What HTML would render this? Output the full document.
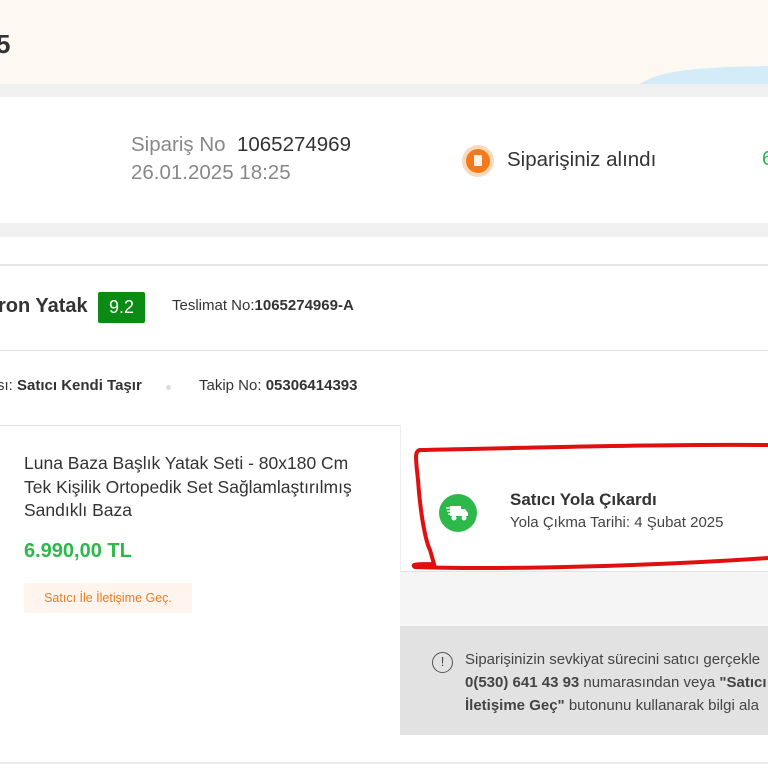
<!DOCTYPE html>
<html><head><meta charset="utf-8"><style>
*{margin:0;padding:0;box-sizing:border-box}
body{width:768px;height:768px;overflow:hidden;background:#fff;font-family:"Liberation Sans",Arial,sans-serif;position:relative;color:#333}
.a{position:absolute;white-space:nowrap}
</style></head><body>
<div class="a" style="left:0;top:0;width:768px;height:84px;background:#fdf9f2"></div>
<svg class="a" style="left:640px;top:62px" width="128" height="22"><path d="M0 22 C20 8 60 5 128 4 L128 22 Z" fill="#d4ecf7"/></svg>
<div class="a" style="left:-4px;top:29px;font-size:26px;font-weight:bold;color:#333">5</div>
<div class="a" style="left:0;top:84px;width:768px;height:13px;background:#f0f0f0"></div>
<div class="a" style="left:0;top:223px;width:768px;height:14px;background:#f0f0f0"></div>
<div class="a" style="left:131px;top:133px;font-size:20.5px;color:#888">Sipariş No&nbsp; <span style="color:#333">1065274969</span></div>
<div class="a" style="left:131px;top:161px;font-size:20.5px;color:#888">26.01.2025 18:25</div>
<div class="a" style="left:462px;top:145px;width:32px;height:32px;border-radius:50%;background:#fbd9bf"></div>
<div class="a" style="left:466px;top:149px;width:24px;height:24px;border-radius:50%;background:#f27a1a"></div>
<div class="a" style="left:474px;top:155px;width:8px;height:11px;background:#fff3e8;border-radius:1px"></div>
<div class="a" style="left:507px;top:148px;font-size:20.5px;color:#333">Siparişiniz alındı</div>
<div class="a" style="left:762px;top:148px;font-size:20px;color:#2db84b">6</div>
<div class="a" style="left:0;top:264px;width:768px;height:2px;background:#e6e6e6"></div>
<div class="a" style="left:-2px;top:295px;font-size:20px;font-weight:bold;color:#333">ron Yatak</div>
<div class="a" style="left:98px;top:292px;width:47px;height:31px;background:#0b8a14;border-radius:2px;color:#fff;font-size:18px;text-align:center;line-height:31px">9.2</div>
<div class="a" style="left:172px;top:297px;font-size:15px;color:#333">Teslimat No:<b>1065274969-A</b></div>
<div class="a" style="left:0;top:350px;width:768px;height:1px;background:#e0e0e0"></div>
<div class="a" style="left:-3px;top:377px;font-size:15px;color:#333">sı: <b>Satıcı Kendi Taşır</b></div>
<div class="a" style="left:166px;top:385px;width:5px;height:5px;border-radius:50%;background:#ddd"></div>
<div class="a" style="left:199px;top:377px;font-size:15px;color:#333">Takip No: <b>05306414393</b></div>
<div class="a" style="left:0;top:425px;width:768px;height:1px;background:#e0e0e0"></div>
<div class="a" style="left:24px;top:452px;font-size:17.5px;line-height:23.5px;color:#333">Luna Baza Başlık Yatak Seti - 80x180 Cm<br>Tek Kişilik Ortopedik Set Sağlamlaştırılmış<br>Sandıklı Baza</div>
<div class="a" style="left:24px;top:540px;font-size:20px;font-weight:bold;color:#2db84b">6.990,00 TL</div>
<div class="a" style="left:24px;top:583px;width:168px;height:30px;background:#fff5ee;color:#f27a1a;font-size:12.5px;text-align:center;line-height:30px">Satıcı İle İletişime Geç.</div>
<div class="a" style="left:400px;top:425px;width:368px;height:146px;background:#fff;border-left:1px solid #eee"></div>
<div class="a" style="left:400px;top:571px;width:368px;height:55px;background:#f5f5f5;border-top:1px solid #e3e3e3"></div>
<div class="a" style="left:400px;top:626px;width:368px;height:109px;background:#e2e2e2"></div>
<div class="a" style="left:439px;top:494px;width:38px;height:38px;border-radius:50%;background:#2db84b"></div>
<svg class="a" style="left:446px;top:503px" width="24" height="20"><rect x="4" y="3" width="11" height="10" fill="#fff"/><path d="M15 6h4l3 4v3h-7z" fill="#fff"/><circle cx="8" cy="15" r="2.5" fill="#fff"/><circle cx="18" cy="15" r="2.5" fill="#fff"/><path d="M0 5h5M1 8h4M2 11h3" stroke="#fff" stroke-width="1.3"/></svg>
<div class="a" style="left:510px;top:490px;font-size:17px;font-weight:bold;color:#333">Satıcı Yola Çıkardı</div>
<div class="a" style="left:510px;top:514px;font-size:15px;color:#444">Yola Çıkma Tarihi: 4 Şubat 2025</div>
<svg class="a" style="left:400px;top:430px" width="368" height="145"><path d="M368 15 C260 14 120 18 20 20 C14 21 16 30 18 50 C20 80 25 110 30 120 L34 134 C20 134 10 134 15 137 C100 140 250 136 368 128" fill="none" stroke="#e01010" stroke-width="4" stroke-linecap="round"/></svg>
<div class="a" style="left:432px;top:652px;width:21px;height:21px;border:1.5px solid #555;border-radius:50%;text-align:center;font-size:13px;line-height:18px;color:#444">!</div>
<div class="a" style="left:465px;top:648px;font-size:15px;line-height:23px;color:#444">Siparişinizin sevkiyat sürecini satıcı gerçekle<br><b>0(530) 641 43 93</b> numarasından veya <b>"Satıcı</b><br><b>İletişime Geç"</b> butonunu kullanarak bilgi ala</div>
<div class="a" style="left:0;top:762px;width:768px;height:2px;background:#ececec"></div>
</body></html>
